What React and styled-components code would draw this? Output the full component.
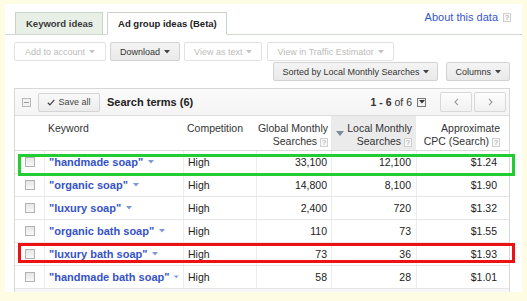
import React from "react";
import styled, { createGlobalStyle } from "styled-components";

const GlobalStyle = createGlobalStyle`
  html, body {
    margin: 0;
    padding: 0;
    background: #fefde4;
  }
  body {
    font-family: "Liberation Sans", Arial, sans-serif;
    color: #222;
  }
`;

const rows = [
  { keyword: "handmade soap", competition: "High", global: "33,100", local: "12,100", cpc: "$1.24", mark: "green" },
  { keyword: "organic soap", competition: "High", global: "14,800", local: "8,100", cpc: "$1.90" },
  { keyword: "luxury soap", competition: "High", global: "2,400", local: "720", cpc: "$1.32" },
  { keyword: "organic bath soap", competition: "High", global: "110", local: "73", cpc: "$1.55" },
  { keyword: "luxury bath soap", competition: "High", global: "73", local: "36", cpc: "$1.93", mark: "red" },
  { keyword: "handmade bath soap", competition: "High", global: "58", local: "28", cpc: "$1.01" },
];

function Caret({ color = "#777" }) {
  return (
    <svg width="6" height="4" viewBox="0 0 6 4">
      <path d="M0 0 L6 0 L3 3.5 Z" fill={color} />
    </svg>
  );
}

function Help() {
  return <HelpBox>?</HelpBox>;
}

export default function App() {
  return (
    <>
      <GlobalStyle />
      <Page>
        <Panel>
          <TabBar>
            <Tab>Keyword ideas</Tab>
            <Tab $active>Ad group ideas (Beta)</Tab>
            <AboutLink>
              About this data <Help />
            </AboutLink>
          </TabBar>

          <Content>
            <ToolRow>
              <ToolButton $pad={10}>Add to account <Caret color="#c4c4c4" /></ToolButton>
              <ToolButton $enabled $pad={9}>Download <Caret color="#444" /></ToolButton>
              <ToolButton $pad={9}>View as text <Caret color="#c4c4c4" /></ToolButton>
              <ToolButton $pad={9} $gapBefore={1}>View in Traffic Estimator <Caret color="#c4c4c4" /></ToolButton>
            </ToolRow>
            <ToolRow $right>
              <ToolButton $enabled $pad={8}>Sorted by Local Monthly Searches <Caret color="#444" /></ToolButton>
              <ToolButton $enabled $pad={8}>Columns <Caret color="#444" /></ToolButton>
            </ToolRow>

            <Table>
              <TopBar>
                <Collapse />
                <SaveButton>
                  <svg width="8" height="7" viewBox="0 0 8 7">
                    <path d="M0.8 3.8 L2.9 5.8 L7.3 0.8" stroke="#444" strokeWidth="1.2" fill="none" />
                  </svg>
                  Save all
                </SaveButton>
                <TermsTitle>Search terms (6)</TermsTitle>
                <Paging>
                  <b>1 - 6</b>&nbsp;of 6
                  <PageMenu>
                    <Caret color="#333" />
                  </PageMenu>
                </Paging>
                <Pager>
                  <PagerButton>
                    <svg width="5" height="8" viewBox="0 0 5 8">
                      <path d="M4 0.8 L1 4 L4 7.2" stroke="#9a9a9a" strokeWidth="1.1" fill="none" />
                    </svg>
                  </PagerButton>
                  <PagerButton>
                    <svg width="5" height="8" viewBox="0 0 5 8">
                      <path d="M1 0.8 L4 4 L1 7.2" stroke="#9a9a9a" strokeWidth="1.1" fill="none" />
                    </svg>
                  </PagerButton>
                </Pager>
              </TopBar>

              <HeadRow>
                <HeadCell />
                <HeadCell>Keyword</HeadCell>
                <HeadCell>Competition</HeadCell>
                <HeadCell $num $padRight={3}>
                  <HeadText>
                    Global Monthly
                    <br />
                    Searches <Help />
                  </HeadText>
                </HeadCell>
                <HeadCell $num $sorted $padRight={4}>
                  <SortArrow>
                    <svg width="8" height="5" viewBox="0 0 8 5">
                      <path d="M0 0 L8 0 L4 5 Z" fill="#7d8b99" />
                    </svg>
                  </SortArrow>
                  <HeadText>
                    Local Monthly
                    <br />
                    Searches <Help />
                  </HeadText>
                </HeadCell>
                <HeadCell $num $padRight={9}>
                  <HeadText>
                    Approximate
                    <br />
                    CPC (Search) <Help />
                  </HeadText>
                </HeadCell>
              </HeadRow>

              {rows.map((r) => (
                <DataRow key={r.keyword} $mark={r.mark}>
                  <Cell $center>
                    <Checkbox />
                  </Cell>
                  <Cell>
                    <KeywordLink>"{r.keyword}"</KeywordLink>
                    <Caret color="#7d98d8" />
                  </Cell>
                  <Cell>{r.competition}</Cell>
                  <Cell $num $padRight={4}>{r.global}</Cell>
                  <Cell $num $padRight={5}>{r.local}</Cell>
                  <Cell $num $padRight={12}>{r.cpc}</Cell>
                </DataRow>
              ))}
              <Footer />
            </Table>
          </Content>
        </Panel>
      </Page>
    </>
  );
}

const Page = styled.div`
  padding: 4px 5px 0;
`;

const Panel = styled.div`
  width: 517px;
  height: 288px;
  background: #fff;
  overflow: hidden;
`;

const TabBar = styled.div`
  display: flex;
  align-items: flex-end;
  height: 30px;
  padding: 0 11px 0 10px;
  border-bottom: 1px solid #cddacd;
`;

const Tab = styled.div`
  display: flex;
  align-items: center;
  box-sizing: border-box;
  height: ${(p) => (p.$active ? "23px" : "22px")};
  margin-bottom: ${(p) => (p.$active ? "-1px" : "0")};
  margin-right: 4px;
  padding: 0 9px 0 10px;
  border: 1px solid #c6d6c6;
  border-bottom: ${(p) => (p.$active ? "1px solid #fff" : "none")};
  background: ${(p) => (p.$active ? "#fff" : "#e7efe6")};
  font-size: 9.5px;
  font-weight: bold;
  color: ${(p) => (p.$active ? "#222" : "#3a3a3a")};
  white-space: nowrap;
`;

const AboutLink = styled.div`
  margin-left: auto;
  align-self: flex-start;
  margin-top: 7px;
  display: flex;
  align-items: center;
  gap: 5px;
  font-size: 11px;
  color: #3656c8;
`;

const HelpBox = styled.span`
  display: inline-flex;
  align-items: center;
  justify-content: center;
  box-sizing: border-box;
  width: 8px;
  height: 9px;
  border: 1px solid #cfcfcf;
  background: #f7f7f7;
  color: #9a9a9a;
  font-size: 7px;
  font-weight: normal;
  line-height: 1;
  vertical-align: middle;
`;

const Content = styled.div`
  padding: 0 12px 0 9px;
`;

const ToolRow = styled.div`
  display: flex;
  justify-content: ${(p) => (p.$right ? "flex-end" : "flex-start")};
  gap: ${(p) => (p.$right ? "8px" : "4px")};
  margin-top: ${(p) => (p.$right ? "1px" : "7px")};
`;

const ToolButton = styled.div`
  display: flex;
  align-items: center;
  gap: 4px;
  box-sizing: border-box;
  height: 19px;
  margin-left: ${(p) => p.$gapBefore || 0}px;
  padding: 0 ${(p) => p.$pad}px;
  border: 1px solid ${(p) => (p.$enabled ? "#d2d2d2" : "#e2e2e2")};
  border-radius: 2px;
  background: ${(p) =>
    p.$enabled ? "linear-gradient(#f4f4f4, #e9e9e9)" : "#fff"};
  color: ${(p) => (p.$enabled ? "#333" : "#bbb")};
  font-size: 9px;
  white-space: nowrap;
`;

const Table = styled.div`
  margin-top: 7px;
  border: 1px solid #d8d8d8;
  border-bottom: none;
`;

const TopBar = styled.div`
  display: flex;
  align-items: center;
  height: 26px;
  padding: 0 3px 0 7px;
  border-bottom: 1px solid #dcdcdc;
  background: linear-gradient(#fbfbfb, #f4f4f4);
`;

const Collapse = styled.span`
  position: relative;
  box-sizing: border-box;
  width: 9px;
  height: 9px;
  border: 1px solid #b8b8b8;
  background: #f2f2f2;
  margin-right: 7px;

  &::before {
    content: "";
    position: absolute;
    left: 1px;
    right: 1px;
    top: 3px;
    height: 1px;
    background: #999;
  }
`;

const SaveButton = styled.div`
  display: flex;
  align-items: center;
  justify-content: center;
  gap: 3px;
  box-sizing: border-box;
  width: 62px;
  height: 19px;
  border: 1px solid #d4d4d4;
  border-radius: 2px;
  background: linear-gradient(#f9f9f9, #ececec);
  font-size: 9px;
  color: #444;
`;

const TermsTitle = styled.div`
  margin-left: 7px;
  font-size: 11px;
  font-weight: bold;
  color: #222;
`;

const Paging = styled.div`
  margin-left: auto;
  display: flex;
  align-items: center;
  font-size: 10.5px;
  color: #333;

  b {
    font-weight: bold;
  }
`;

const PageMenu = styled.span`
  display: inline-flex;
  align-items: center;
  justify-content: center;
  box-sizing: border-box;
  width: 9px;
  height: 9px;
  margin-left: 5px;
  border: 1px solid #777;
  background: #f4f4f4;
`;

const Pager = styled.div`
  display: flex;
  gap: 2px;
  margin-left: 14px;
`;

const PagerButton = styled.div`
  display: flex;
  align-items: center;
  justify-content: center;
  box-sizing: border-box;
  width: 32px;
  height: 20px;
  border: 1px solid #d8d8d8;
  border-radius: 2px;
  background: linear-gradient(#fdfdfd, #f1f1f1);
`;

const columns = "29px 139px 73px 75px 85px 93px";

const HeadRow = styled.div`
  display: grid;
  grid-template-columns: ${columns};
  height: 35px;
  box-sizing: border-box;
  border-bottom: 1px solid #dadada;
`;

const HeadCell = styled.div`
  display: flex;
  justify-content: ${(p) => (p.$num ? "flex-end" : "flex-start")};
  padding: 6px ${(p) => (p.$padRight != null ? p.$padRight : 4)}px 0 4px;
  background: ${(p) => (p.$sorted ? "#ebebeb" : "#fff")};
  font-size: 10.5px;
  line-height: 13px;
  color: #333;
  white-space: nowrap;
`;

const HeadText = styled.div`
  text-align: right;
`;

const SortArrow = styled.span`
  align-self: center;
  margin-right: auto;
  margin-left: 1px;
  margin-top: -6px;
  display: flex;
`;

const markColors = { green: "#22cc33", red: "#ee1111" };

const DataRow = styled.div`
  position: relative;
  display: grid;
  grid-template-columns: ${columns};
  height: 23px;
  box-sizing: border-box;
  border-bottom: 1px solid #e6e6e6;

  ${(p) =>
    p.$mark &&
    `
    &::after {
      content: "";
      position: absolute;
      left: 3px;
      right: -6px;
      top: ${p.$mark === "green" ? "3px" : "0"};
      bottom: ${p.$mark === "green" ? "-3px" : "2px"};
      border: 3px solid ${markColors[p.$mark]};
      z-index: 1;
      pointer-events: none;
    }
  `}
`;

const Cell = styled.div`
  display: flex;
  align-items: center;
  justify-content: ${(p) => (p.$center ? "center" : p.$num ? "flex-end" : "flex-start")};
  gap: 5px;
  padding: 0 ${(p) => (p.$padRight != null ? p.$padRight : 4)}px 0 4px;
  font-size: 10.5px;
  color: #222;
  white-space: nowrap;

  & + & {
    border-left: 1px solid #ededed;
  }
`;

const Checkbox = styled.span`
  box-sizing: border-box;
  width: 10px;
  height: 10px;
  border: 1px solid #b2b2b2;
  background: linear-gradient(#e6e6e6, #f8f8f8);
`;

const KeywordLink = styled.span`
  font-size: 11px;
  font-weight: bold;
  color: #3553c6;
`;

const Footer = styled.div`
  height: 6px;
  background: #f7f7f7;
`;
